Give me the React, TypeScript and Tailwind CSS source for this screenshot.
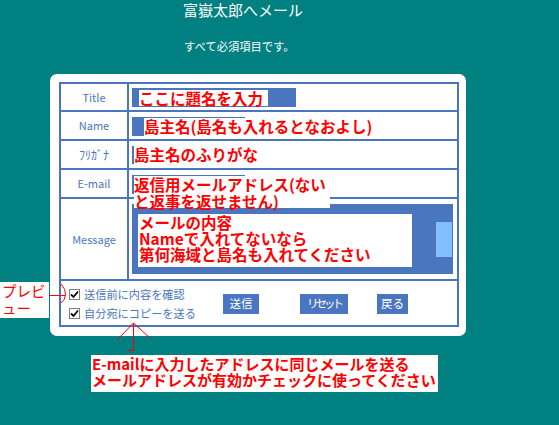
const blue = "bg-[#4a76c0]";

function Checkbox() {
  return (
    <span className="flex h-[11px] w-[11px] items-center justify-center border border-[#808080] bg-white">
      <svg width="9" height="9" viewBox="0 0 9 9">
        <path d="M1 4.5 L3.5 7 L8 1.5" fill="none" stroke="#000" strokeWidth="1.8" />
      </svg>
    </span>
  );
}

function Label({ children }: { children: React.ReactNode }) {
  return (
    <div className="flex items-center justify-center bg-white text-[11px] text-[#4a76c0]">
      {children}
    </div>
  );
}

export default function App() {
  const note = "bg-white font-semibold text-[#ff0000] text-[15.5px] leading-[17px] whitespace-nowrap";
  return (
    <div className="relative h-[425px] w-[559px] overflow-hidden bg-[#008080] font-['Noto_Sans_CJK_JP',sans-serif]">
      <h1 className="pl-[183px] text-[15px] leading-[20px] text-white">富嶽太郎へメール</h1>
      <p className="mt-[18px] pl-[184px] text-[11.3px] leading-[16px] text-white">すべて必須項目です。</p>

      <div className="ml-[50px] mt-[20px] h-[262px] w-[416px] rounded-[7px] bg-white pl-[9px] pt-[8px]">
        <div
          className={`grid w-[400px] grid-cols-[66px_328px] grid-rows-[26px_27px_27px_27px_80px_44px] gap-[2px] p-[2px] ${blue}`}
        >
          <Label>Title</Label>
          <div className="bg-white pl-[3px] pt-[4px]">
            <div className={`relative h-[19px] w-[164px] ${blue}`}>
              <span className={`absolute left-[7px] top-[2px] h-[16px] w-[129px] ${note}`}>ここに題名を入力</span>
            </div>
          </div>

          <Label>Name</Label>
          <div className="bg-white pl-[3px] pt-[5px]">
            <div className={`relative h-[19px] w-[113px] ${blue}`}>
              <span className={`absolute left-[12px] top-[1px] h-[19px] ${note}`}>島主名(島名も入れるとなおよし)</span>
            </div>
          </div>

          <Label>
            <span className="text-[12px]">ﾌﾘｶﾞﾅ</span>
          </Label>
          <div className="bg-white pl-[3px] pt-[5px]">
            <div className={`relative h-[18px] w-[113px] ${blue}`}>
              <span className={`absolute left-[2px] top-0 h-[19px] ${note}`}>島主名のふりがな</span>
            </div>
          </div>

          <Label>E-mail</Label>
          <div className="bg-white pl-[3px] pt-[5px]">
            <div className={`relative h-[19px] w-[113px] ${blue}`}>
              <span className={`absolute left-[2px] top-[1px] z-10 h-[32px] w-[196px] ${note} leading-[16px]`}>
                返信用メールアドレス(ない
                <br />
                と返事を返せません)
              </span>
            </div>
          </div>

          <Label>Message</Label>
          <div className="bg-white pl-[3px] pt-[5px]">
            <div className={`flex h-[70px] w-[321px] pl-[6px] pt-[10px] ${blue}`}>
              <div className="h-[53px] w-[274px] bg-white pl-[1px] text-[15.5px] font-semibold leading-[16px] text-[#ff0000]">
                メールの内容
                <br />
                Nameで入れてないなら
                <br />
                第何海域と島名も入れてください
              </div>
              <div className="ml-[24px] mt-[8px] h-[35px] w-[16px] bg-[#80c0ff]" />
            </div>
          </div>

          <div className="col-span-2 flex bg-white">
            <div className="flex w-[162px] flex-col gap-[7px] pl-[8px] pt-[7px] text-[11.2px] text-[#4a76c0]">
              <div className="flex h-[12px] items-center gap-[4px]">
                <Checkbox />
                <span>送信前に内容を確認</span>
              </div>
              <div className="flex h-[12px] items-center gap-[4px]">
                <Checkbox />
                <span>自分宛にコピーを送る</span>
              </div>
            </div>
            <div className="flex pt-[13px] text-[11.5px] text-white">
              <div className={`flex h-[20px] w-[36px] items-center justify-center ${blue}`}>送信</div>
              <div className={`ml-[41px] flex h-[20px] w-[48px] items-center justify-center tracking-[-3px] ${blue}`}>
                リセット
              </div>
              <div className={`ml-[29px] flex h-[20px] w-[31px] items-center justify-center ${blue}`}>戻る</div>
            </div>
          </div>
        </div>
      </div>

      {/* annotations */}
      <div className="absolute left-0 top-[282px] h-[36px] w-[49px] bg-white pl-[2px] text-[14.5px] leading-[17px] text-[#ff0000]">
        プレビ
        <br />
        ュー
      </div>
      <svg className="absolute left-[40px] top-[280px]" width="30" height="28" viewBox="40 280 30 28">
        <path d="M49 295.5 H65" stroke="#ff0000" strokeWidth="1" fill="none" />
        <path d="M61 284 Q66 289 65.5 295 Q65 300 61 303" stroke="#ff0000" strokeWidth="1" fill="none" />
      </svg>
      <svg className="absolute left-[110px] top-[320px]" width="45" height="35" viewBox="110 320 45 35">
        <path
          d="M133.5 323 V350 M128 350.5 H133.5 M133.5 323 L117 340 M133.5 323 L150 338"
          stroke="#ff0000"
          strokeWidth="1"
          fill="none"
        />
      </svg>
      <div className="absolute left-[91px] top-[355px] h-[37px] w-[347px] bg-white pl-[1px] pt-[1px] text-[15px] font-semibold leading-[16px] text-[#ff0000]">
        E-mailに入力したアドレスに同じメールを送る
        <br />
        メールアドレスが有効かチェックに使ってください
      </div>
    </div>
  );
}
